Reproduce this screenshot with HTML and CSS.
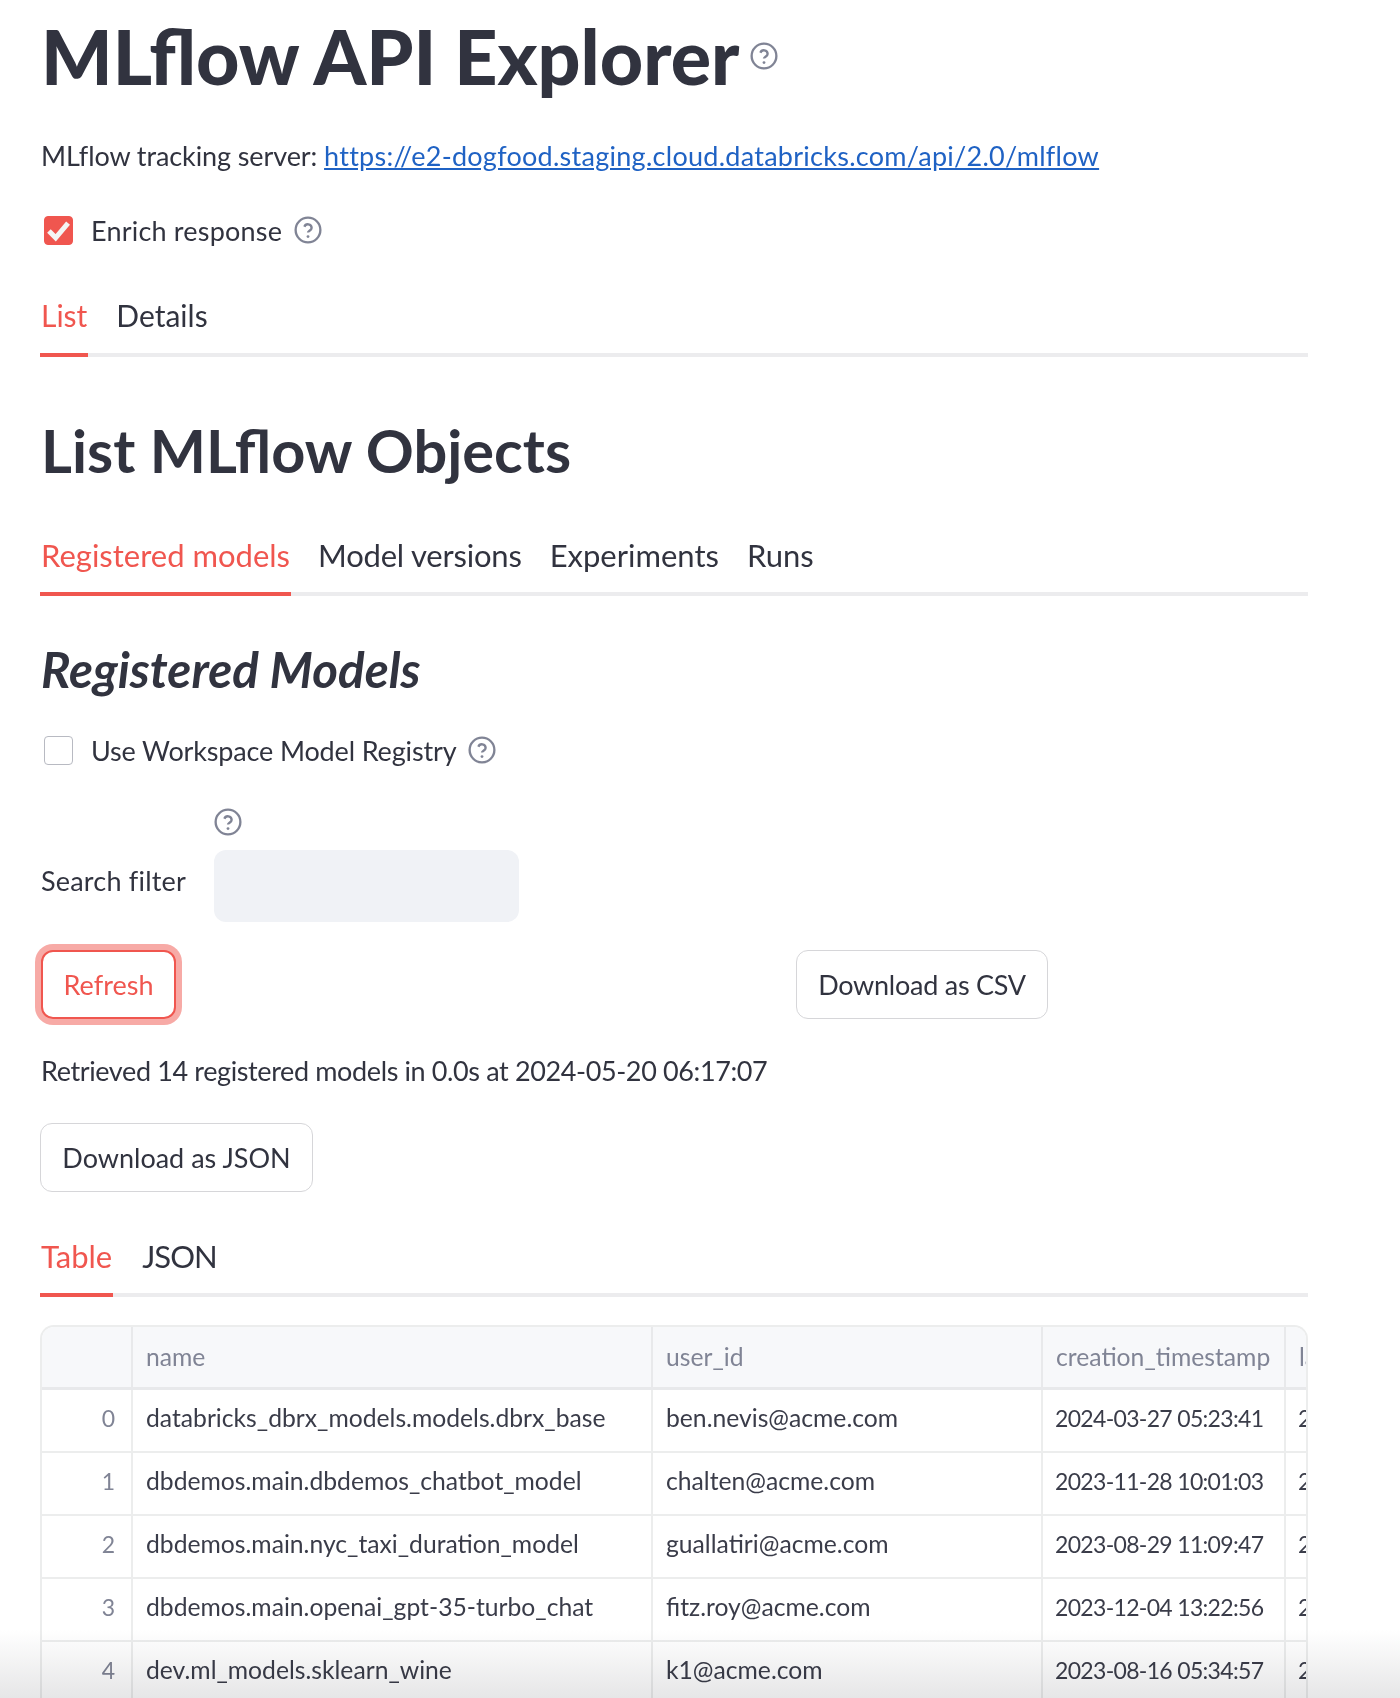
FILE: index.html
```html
<!DOCTYPE html>
<html lang="en">
<head>
<meta charset="utf-8">
<title>MLflow API Explorer</title>
<link rel="stylesheet" href="styles.css">
</head>
<body>
<svg class="defs" width="0" height="0" aria-hidden="true">
  <symbol id="help" viewBox="0 0 24 24"><circle cx="12" cy="12" r="10.6" fill="none" stroke="currentColor" stroke-width="2"/><path d="M8.900 9.200a3.200 3.200 0 0 1 6.200 1c0 2.100-3.100 2.600-3.100 4" fill="none" stroke="currentColor" stroke-width="2"/><circle cx="12" cy="17.600" r="1.200" fill="currentColor"/></symbol>
</svg>
<main class="page">
  <header class="title-row">
    <h1 class="title">MLflow API Explorer</h1>
    <svg class="help help-title"><use href="#help"/></svg>
  </header>
  <p class="server">MLflow tracking server: <a class="link" href="#">https://e2-dogfood.staging.cloud.databricks.com/api/2.0/mlflow</a></p>
  <label class="check-row check-enrich">
    <span class="box box-on"><svg viewBox="0 0 24 24" class="tick"><path d="M3.500 12.500l6 6 11-13" fill="none" stroke="#f4f4f4" stroke-width="4.500"/></svg></span>
    <span class="check-label">Enrich response</span>
    <svg class="help"><use href="#help"/></svg>
  </label>
  <nav class="tabs tabs-top">
    <span class="tab tab-on">List</span>
    <span class="tab">Details</span>
  </nav>
  <h2 class="heading">List MLflow Objects</h2>
  <nav class="tabs tabs-objects">
    <span class="tab tab-on">Registered models</span>
    <span class="tab tab-tight">Model versions</span>
    <span class="tab">Experiments</span>
    <span class="tab">Runs</span>
  </nav>
  <h3 class="subheading">Registered Models</h3>
  <label class="check-row check-registry">
    <span class="box"></span>
    <span class="check-label">Use Workspace Model Registry</span>
    <svg class="help"><use href="#help"/></svg>
  </label>
  <div class="search-row">
    <span class="search-label">Search filter</span>
    <div class="search-col">
      <svg class="help"><use href="#help"/></svg>
      <div class="search-input"></div>
    </div>
  </div>
  <div class="actions">
    <button class="btn btn-focus">Refresh</button>
    <button class="btn btn-csv">Download as CSV</button>
  </div>
  <p class="status">Retrieved 14 registered models in 0.0s at 2024-05-20 06:17:07</p>
  <button class="btn btn-json">Download as JSON</button>
  <nav class="tabs tabs-view">
    <span class="tab tab-on">Table</span>
    <span class="tab tab-narrow">JSON</span>
  </nav>
  <div class="grid-wrap">
    <table class="grid">
      <colgroup><col class="c0"><col class="c1"><col class="c2"><col class="c3"><col class="c4"></colgroup>
      <thead><tr><th></th><th>name</th><th>user_id</th><th>creation_timestamp</th><th>last_updated_timestamp</th></tr></thead>
      <tbody>
        <tr><td class="idx">0</td><td>databricks_dbrx_models.models.dbrx_base</td><td>ben.nevis@acme.com</td><td class="ts">2024-03-27 05:23:41</td><td class="ts">2024-03-27 05:23:41</td></tr>
        <tr><td class="idx">1</td><td>dbdemos.main.dbdemos_chatbot_model</td><td>chalten@acme.com</td><td class="ts">2023-11-28 10:01:03</td><td class="ts">2023-11-28 10:01:03</td></tr>
        <tr><td class="idx">2</td><td>dbdemos.main.nyc_taxi_duration_model</td><td>guallatiri@acme.com</td><td class="ts">2023-08-29 11:09:47</td><td class="ts">2023-08-29 11:09:47</td></tr>
        <tr><td class="idx">3</td><td>dbdemos.main.openai_gpt-35-turbo_chat</td><td>fitz.roy@acme.com</td><td class="ts">2023-12-04 13:22:56</td><td class="ts">2023-12-04 13:22:56</td></tr>
        <tr><td class="idx">4</td><td>dev.ml_models.sklearn_wine</td><td>k1@acme.com</td><td class="ts">2023-08-16 05:34:57</td><td class="ts">2023-08-16 05:34:57</td></tr>
      </tbody>
    </table>
  </div>
</main>
<div class="fade"></div>
</body>
</html>
```
FILE: styles.css
```css
* { box-sizing: border-box; }
html, body { margin: 0; padding: 0; background: #fff; }
body { width: 1400px; height: 1698px; overflow: hidden; position: relative; font-family: "Lato", "Liberation Sans", sans-serif; font-size: 27px; color: #31333f; }
.defs { position: absolute; }
.page { width: 1308px; padding-left: 40px; }
.help { width: 28px; height: 28px; color: #808495; flex: none; display: block; }
.title-row { display: flex; align-items: center; height: 112px; }
.title { margin: 0 0 0 1px; font-size: 75.300px; font-weight: 900; line-height: 112px; color: #31333f; }
.help-title { margin-left: 11px; }
.server { margin: 24px 0 0 1px; line-height: 40px; height: 40px; letter-spacing: -0.1px; }
.link { color: #1f62c4; text-decoration: underline; letter-spacing: 0.27px; }
.check-row { display: flex; align-items: center; height: 30px; padding-left: 4px; }
.check-enrich { margin-top: 39px; }
.check-enrich .check-label { letter-spacing: 0.2px; }
.box { width: 29px; height: 29px; border-radius: 4px; border: 1px solid #b8bac2; background: #fff; flex: none; display: block; }
.box-on { background: #f0564f; border-color: #f0564f; }
.tick { display: block; width: 27px; height: 27px; }
.check-label { margin-left: 18px; margin-right: 12px; }
.check-registry .check-label { letter-spacing: -0.15px; }
.tabs { display: flex; gap: 27px; border-bottom: 4px solid #ececee; font-size: 31px; }
.tab { padding: 0 1px; height: 63px; line-height: 42px; margin-bottom: -4px; border-bottom: 4px solid transparent; }
.tab-on { color: #f0564f; border-bottom-color: #f0564f; }
.tab-narrow { letter-spacing: -1px; }
.tab-tight { letter-spacing: -0.2px; }
.tabs-top { margin-top: 49px; font-size: 30px; }
.heading { margin: 53px 0 0 1px; font-size: 59.500px; font-weight: 700; line-height: 80px; height: 80px; }
.tabs-objects { margin-top: 43px; gap: 26px; }
.tabs-objects .tab { line-height: 44px; }
.subheading { margin: 41px 0 0 1px; font-size: 49.300px; font-weight: 700; font-style: italic; line-height: 64px; height: 64px; }
.check-registry { margin-top: 34px; }
.search-row { display: flex; align-items: flex-end; margin-top: 43px; }
.search-label { width: 173px; margin-left: 1px; margin-bottom: 21px; line-height: 40px; letter-spacing: 0.2px; }
.search-col { display: flex; flex-direction: column; }
.search-input { width: 305px; height: 72px; border-radius: 12px; background: #f0f2f6; margin-top: 14px; }
.actions { display: flex; margin-top: 28px; }
.btn { font: inherit; color: #31333f; background: #fff; border: 1px solid #d6d6d9; border-radius: 12px; height: 69px; padding: 0; display: block; }
.btn-focus { width: 135px; border: 2px solid #f0564f; color: #f0564f; box-shadow: 0 0 0 6px #f7aaa6; margin-left: 1px; }
.btn-csv { width: 252px; margin-left: 620px; letter-spacing: -0.25px; }
.status { margin: 32px 0 0 1px; line-height: 40px; height: 40px; letter-spacing: -0.38px; }
.btn-json { width: 273px; margin-top: 32px; }
.tabs-view { margin-top: 42px; gap: 28px; }
.tabs-view .tab { line-height: 44px; }
.grid-wrap { margin-top: 28px; width: 1268px; height: 420px; overflow: hidden; border: 2px solid #eceded; border-bottom: 0; border-radius: 14px 14px 0 0; }
.grid { table-layout: fixed; border-collapse: separate; border-spacing: 0; width: 1490px; font-size: 24.700px; color: #3a3c49; }
.c0 { width: 91px; } .c1 { width: 520px; } .c2 { width: 390px; } .c3 { width: 243px; } .c4 { width: 246px; }
.grid th { height: 63px; background: #f7f8fa; color: #808495; font-weight: 400; text-align: left; padding: 0 12px 2px 13px; border-right: 2px solid #e8e9eb; border-bottom: 3px solid #e8e9eb; white-space: nowrap; overflow: hidden; }
.grid td { height: 63px; padding: 0 12px 6px 13px; border-right: 2px solid #eceded; border-bottom: 2px solid #eceded; white-space: nowrap; overflow: hidden; }
.grid .idx { text-align: right; color: #808495; font-size: 23px; padding-right: 16px; }
.grid .ts { font-size: 23px; letter-spacing: -0.68px; padding-left: 12px; }
.fade { position: absolute; left: 0; right: 0; bottom: 0; height: 68px; background: linear-gradient(to bottom, #fff, #e6e6e7); mix-blend-mode: multiply; pointer-events: none; }
```
